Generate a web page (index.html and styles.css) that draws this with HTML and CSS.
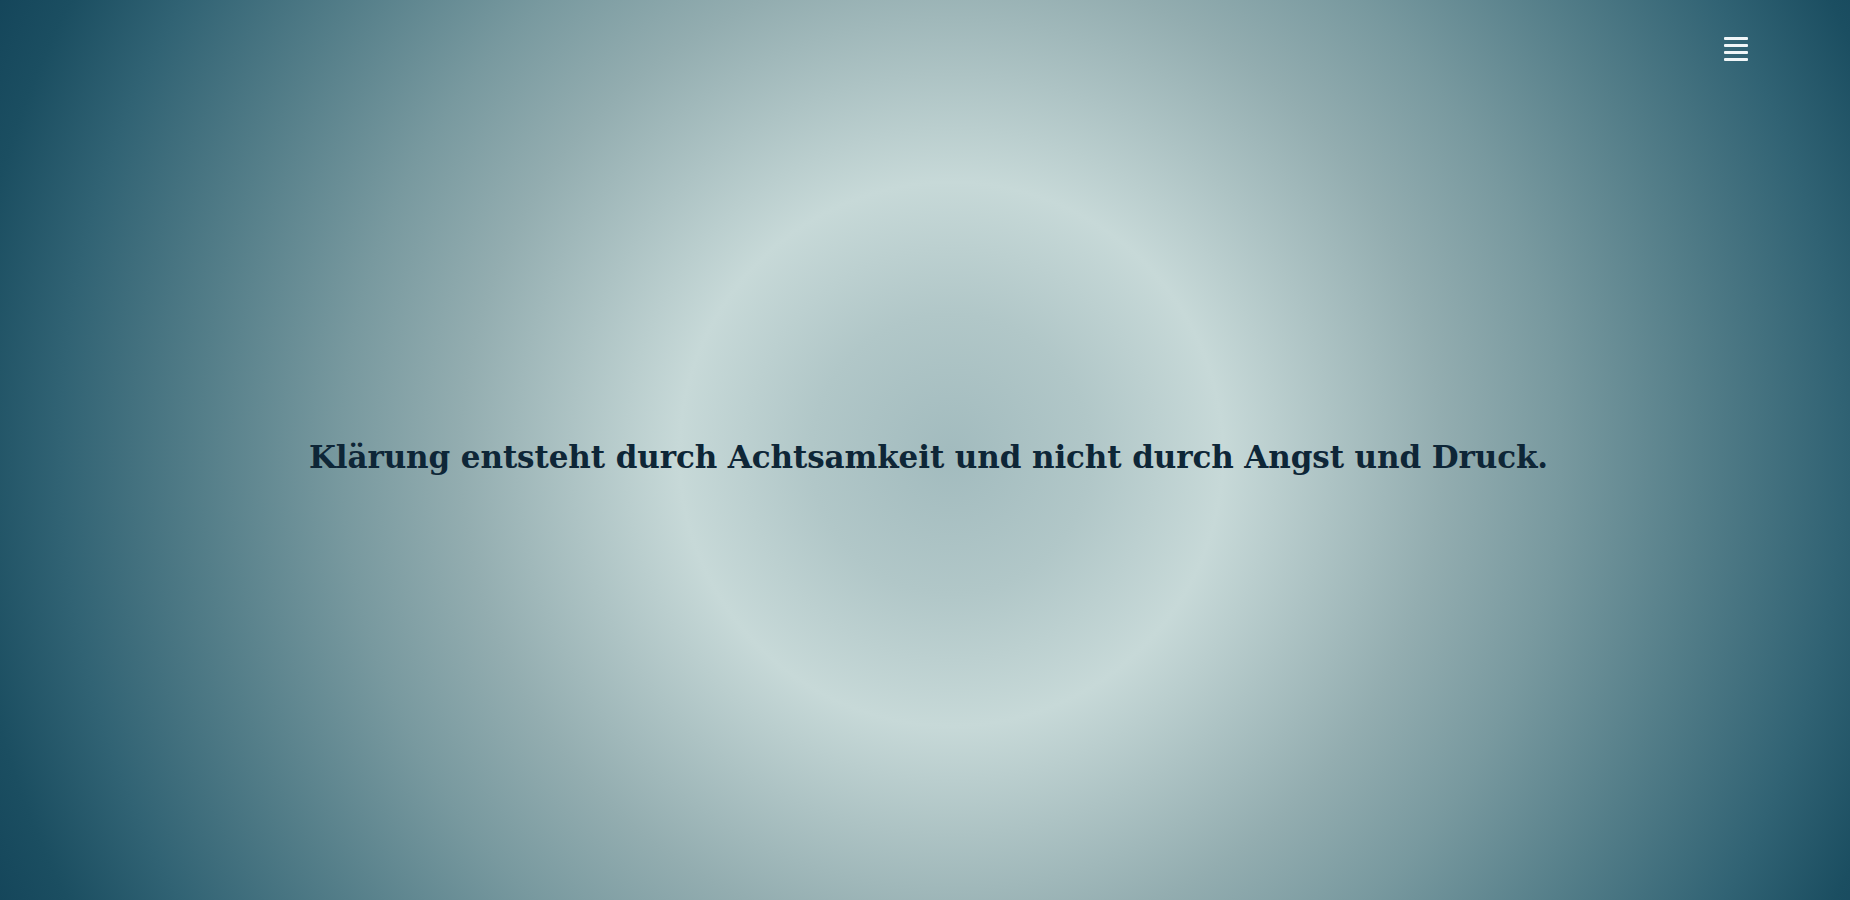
FILE: index.html
```html
<!DOCTYPE html>
<html lang="de">
<head>
<meta charset="utf-8">
<title>Klärung</title>
<link rel="stylesheet" href="styles.css">
</head>
<body>
<main class="hero">
  <button class="menu-btn" aria-label="Menü">
    <span class="menu-line"></span>
    <span class="menu-line"></span>
    <span class="menu-line"></span>
    <span class="menu-line"></span>
  </button>
  <h1 class="quote">Klärung entsteht durch Achtsamkeit und nicht durch Angst und Druck.</h1>
</main>
</body>
</html>
```
FILE: styles.css
```css
html, body {
  margin: 0;
  padding: 0;
  height: 100%;
  overflow: hidden;
}
.hero {
  position: relative;
  width: 100%;
  height: 900px;
  display: flex;
  align-items: center;
  justify-content: center;
  background: radial-gradient(circle at 951px 454px,
    #a2bbbe 0px,
    #b1c7c8 140px,
    #c7d9d8 272px,
    #adc3c4 380px,
    #93adb0 490px,
    #78999f 610px,
    #547e89 750px,
    #316374 890px,
    #1b4e61 990px,
    #14455a 1060px);
}
.quote {
  margin: 14px 0 0 7px;
  font-family: "DejaVu Serif", "Liberation Serif", serif;
  font-weight: bold;
  font-size: 31px;
  letter-spacing: -0.1px;
  color: #0e2637;
}
.menu-btn {
  position: absolute;
  top: 37px;
  right: 102px;
  width: 24px;
  padding: 0;
  border: 0;
  background: none;
  display: flex;
  flex-direction: column;
  gap: 4px;
  cursor: pointer;
}
.menu-line {
  display: block;
  height: 3px;
  width: 24px;
  background: #f0f6f8;
  border-radius: 1px;
}
```
